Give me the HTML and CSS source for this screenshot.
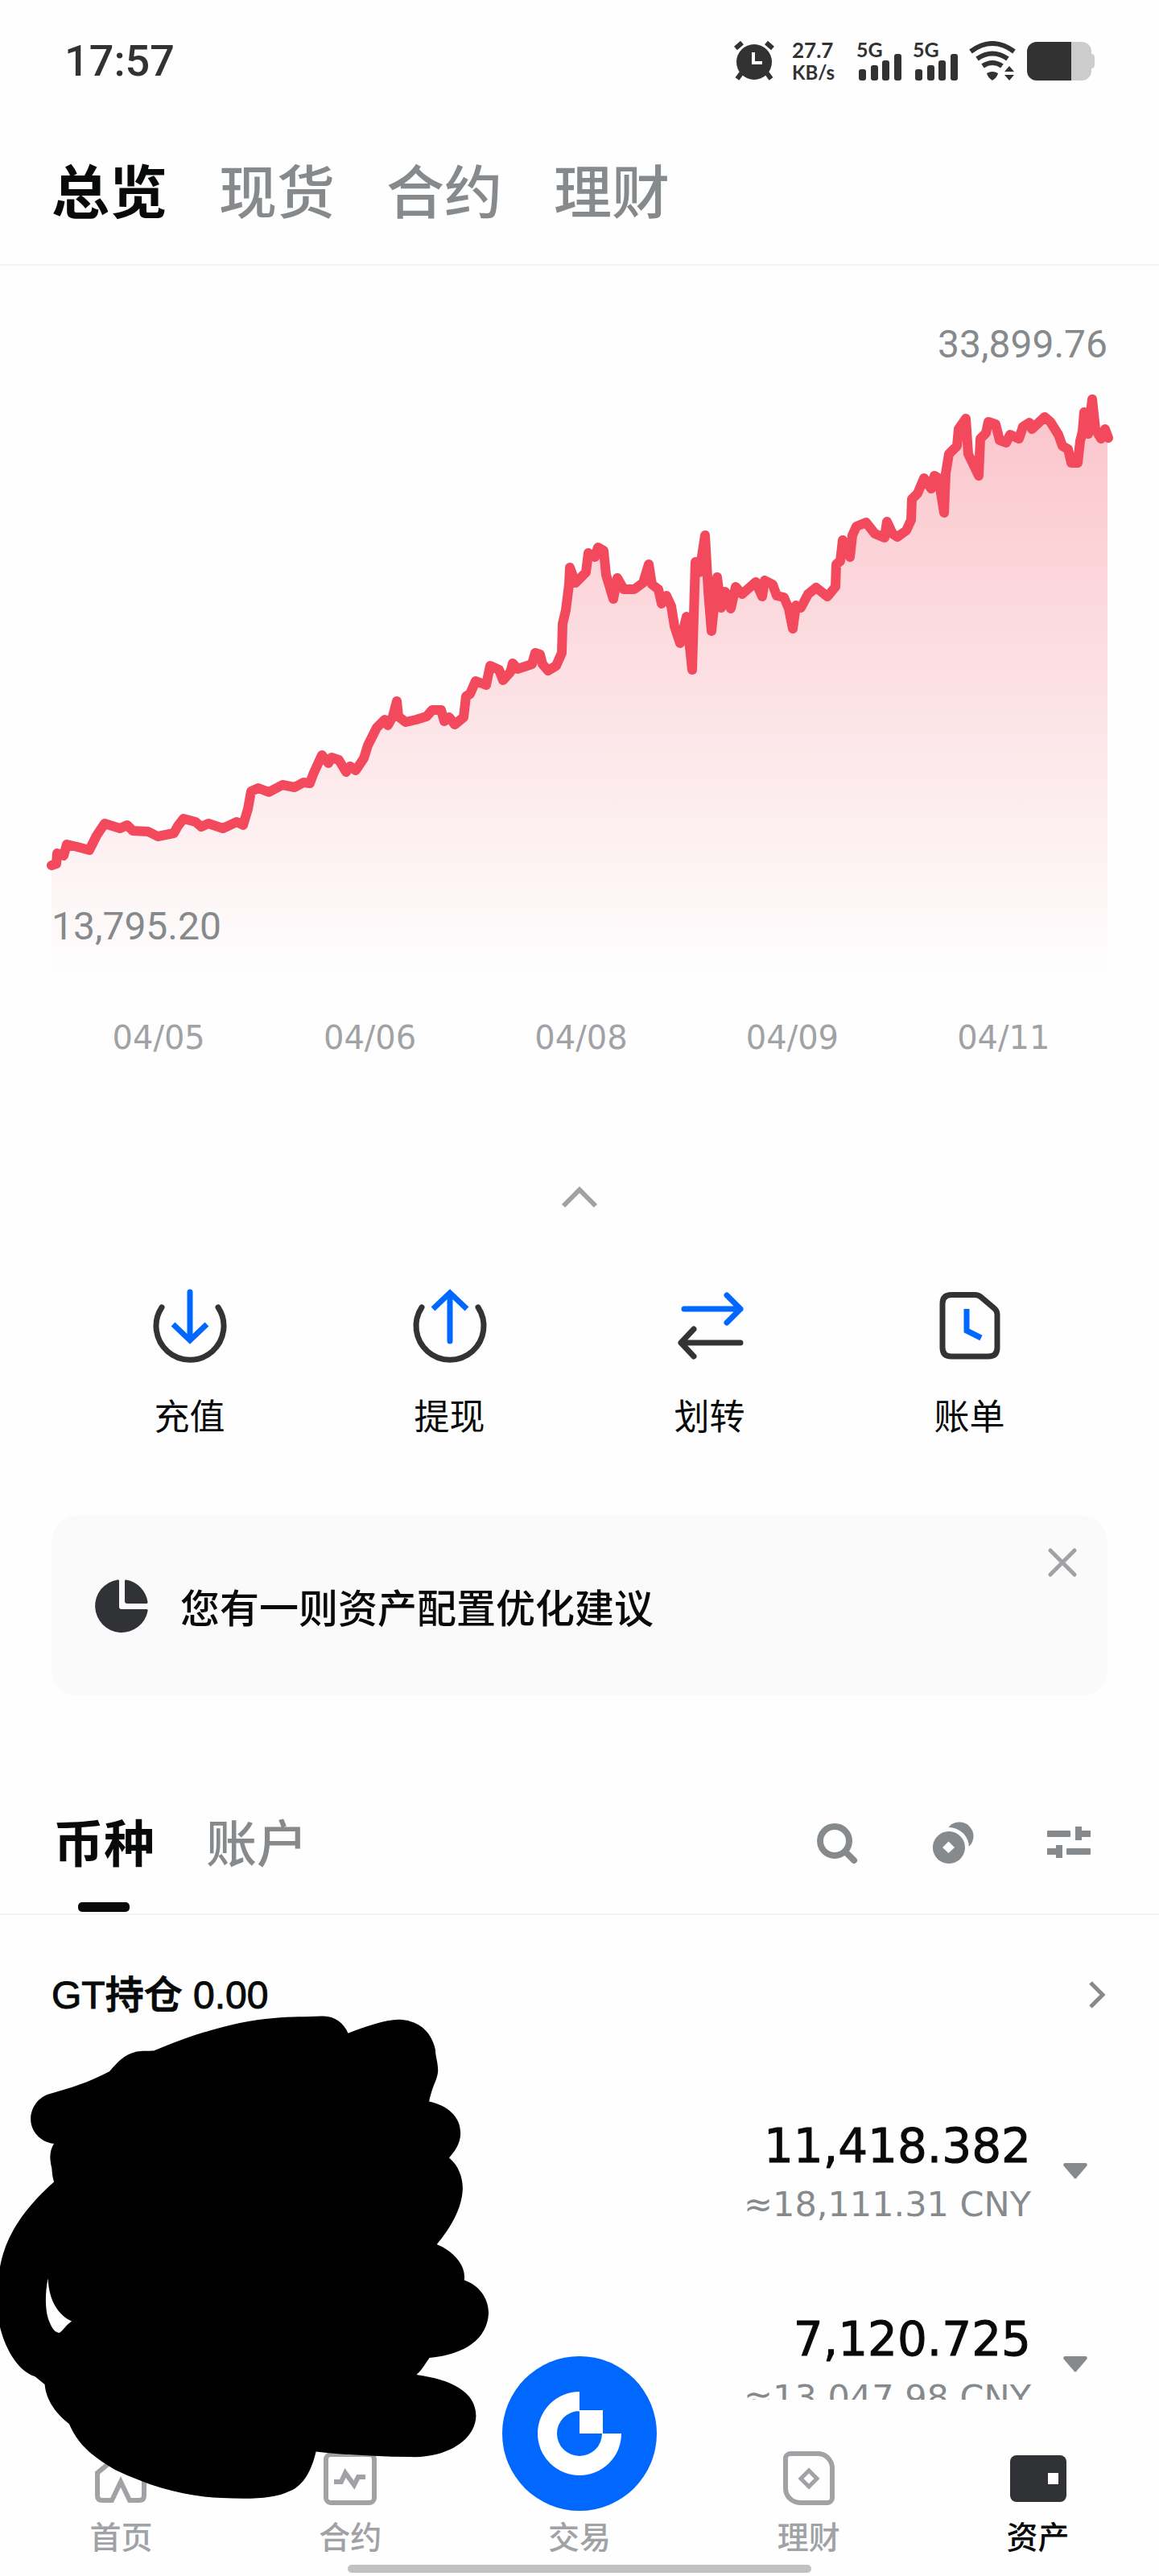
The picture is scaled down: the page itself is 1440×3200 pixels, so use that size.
FILE: index.html
```html
<!DOCTYPE html>
<html lang="zh-CN">
<head>
<meta charset="utf-8">
<meta name="viewport" content="width=device-width, initial-scale=1">
<title>资产总览</title>
<link rel="stylesheet" href="styles.css">
</head>
<body>
<div class="app">
  <header class="status">
    <time class="status-time">17:57</time>
    <div class="status-icons">
      <svg width="50" height="50" viewBox="0 0 50 50" aria-hidden="true">
        <circle cx="25" cy="26" r="22" fill="#323232"/>
        <path d="M2 9 10 2M48 9 40 2M9 40 4 47M41 40 46 47" stroke="#323232" stroke-width="6"/>
        <path d="M24 14V27H35" fill="none" stroke="#fff" stroke-width="4"/>
      </svg>
      <div class="speed"><span>27.7</span><span class="unit">KB/s</span></div>
      <svg class="signal" width="56" height="50" viewBox="0 0 56 50" aria-hidden="true">
        <text class="net" x="0" y="20">5G</text>
        <g fill="#323232"><rect x="3" y="35" width="9" height="14" rx="3"/><rect x="18" y="30" width="9" height="19" rx="3"/><rect x="32" y="24" width="9" height="25" rx="3"/><rect x="47" y="16" width="9" height="33" rx="3"/></g>
      </svg>
      <svg class="signal" width="56" height="50" viewBox="0 0 56 50" aria-hidden="true">
        <text class="net" x="0" y="20">5G</text>
        <g fill="#323232"><rect x="3" y="35" width="9" height="14" rx="3"/><rect x="18" y="30" width="9" height="19" rx="3"/><rect x="32" y="24" width="9" height="25" rx="3"/><rect x="47" y="16" width="9" height="33" rx="3"/></g>
      </svg>
      <svg width="58" height="50" viewBox="0 0 58 50" aria-hidden="true">
        <g fill="none" stroke="#323232" stroke-width="6"><path d="M2 13Q29-7 56 13"/><path d="M10 22Q29 9 48 22"/><path d="M17 31Q29 23 41 31"/></g>
        <path d="M22 40Q29 36 36 40Q35 45 29 49Q23 45 22 40ZM50 31 56 38H44ZM44 42H56L50 49Z" fill="#323232"/>
      </svg>
      <svg width="84" height="48" viewBox="0 0 84 48" aria-hidden="true">
        <path d="M55 0H68a12 12 0 0 1 12 12V15q4 0 4 5v8q0 5-4 5v3a12 12 0 0 1-12 12H55Z" fill="#ccc"/>
        <path d="M12 0H55V48H12A12 12 0 0 1 0 36V12A12 12 0 0 1 12 0Z" fill="#323232"/>
      </svg>
    </div>
  </header>

  <nav class="top-tabs" aria-label="账户类型">
    <a href="#overview" class="active" aria-current="page">总览</a>
    <a href="#spot">现货</a>
    <a href="#futures">合约</a>
    <a href="#earn">理财</a>
  </nav>

  <main class="content">
    <section class="chart" aria-label="资产走势">
      <p class="chart-max">33,899.76</p>
      <div class="plot">
        <svg class="plot-svg" viewBox="0 0 1440 755" aria-hidden="true">
          <defs>
            <linearGradient id="area" x1="0" y1="0" x2="0" y2="1">
              <stop offset="0" stop-color="#f3495d" stop-opacity=".32"/>
              <stop offset="1" stop-color="#f3495d" stop-opacity="0"/>
            </linearGradient>
            <path id="trend" d="M64 615 70 613 71 600 79 603 83 589 96 592 111 596 120 578 130 563 149 569 158 565 165 572 184 573 196 579 216 575 221 566 228 557 243 561 250 567 259 563 277 569 294 561 302 565 308 545 312 523 321 519 334 524 351 515 366 518 377 512 385 513 389 502 400 478 408 488 412 481 421 484 430 499 435 492 442 497 452 482 457 466 468 444 478 434 482 441 488 430 493 411 495 430 504 437 517 434 530 430 537 422 548 422 552 436 558 431 565 440 576 431 579 405 584 402 591 386 604 391 609 367 620 372 625 385 634 375 637 364 643 371 661 365 665 351 671 353 674 365 681 373 691 367 698 351 699 315 703 298 707 266 708 245 715 264 728 251 731 227 739 232 743 220 750 224 753 254 762 284 767 258 775 272 788 272 799 264 806 241 810 266 818 272 822 290 828 280 834 293 838 318 845 339 853 306 860 372 864 238 869 251 876 205 880 275 884 324 891 257 896 295 901 275 908 296 914 269 922 278 939 263 947 281 950 261 960 266 965 280 974 282 980 296 985 321 989 292 995 295 1004 278 1014 270 1028 281 1038 269 1039 241 1044 237 1047 211 1056 232 1059 205 1064 194 1076 189 1087 203 1099 208 1102 188 1109 203 1115 207 1126 199 1132 186 1133 160 1140 153 1148 134 1157 147 1161 131 1166 134 1173 177 1175 128 1179 104 1189 94 1191 73 1200 60 1203 104 1216 131 1218 85 1225 78 1228 64 1237 67 1242 87 1250 90 1255 80 1266 85 1271 70 1279 65 1282 73 1298 58 1305 64 1315 80 1320 94 1327 98 1331 115 1339 115 1342 88 1345 76 1347 52 1352 79 1357 36 1361 73 1368 85 1373 73 1377 84"/>
            <clipPath id="under"><path d="M64 615 70 613 71 600 79 603 83 589 96 592 111 596 120 578 130 563 149 569 158 565 165 572 184 573 196 579 216 575 221 566 228 557 243 561 250 567 259 563 277 569 294 561 302 565 308 545 312 523 321 519 334 524 351 515 366 518 377 512 385 513 389 502 400 478 408 488 412 481 421 484 430 499 435 492 442 497 452 482 457 466 468 444 478 434 482 441 488 430 493 411 495 430 504 437 517 434 530 430 537 422 548 422 552 436 558 431 565 440 576 431 579 405 584 402 591 386 604 391 609 367 620 372 625 385 634 375 637 364 643 371 661 365 665 351 671 353 674 365 681 373 691 367 698 351 699 315 703 298 707 266 708 245 715 264 728 251 731 227 739 232 743 220 750 224 753 254 762 284 767 258 775 272 788 272 799 264 806 241 810 266 818 272 822 290 828 280 834 293 838 318 845 339 853 306 860 372 864 238 869 251 876 205 880 275 884 324 891 257 896 295 901 275 908 296 914 269 922 278 939 263 947 281 950 261 960 266 965 280 974 282 980 296 985 321 989 292 995 295 1004 278 1014 270 1028 281 1038 269 1039 241 1044 237 1047 211 1056 232 1059 205 1064 194 1076 189 1087 203 1099 208 1102 188 1109 203 1115 207 1126 199 1132 186 1133 160 1140 153 1148 134 1157 147 1161 131 1166 134 1173 177 1175 128 1179 104 1189 94 1191 73 1200 60 1203 104 1216 131 1218 85 1225 78 1228 64 1237 67 1242 87 1250 90 1255 80 1266 85 1271 70 1279 65 1282 73 1298 58 1305 64 1315 80 1320 94 1327 98 1331 115 1339 115 1342 88 1345 76 1347 52 1352 79 1357 36 1361 73 1368 85 1373 73 1376 84V755H64Z"/></clipPath>
          </defs>
          <rect x="64" y="36" width="1312" height="719" fill="url(#area)" clip-path="url(#under)"/>
          <use href="#trend" fill="none" stroke="#f3495d" stroke-width="12" stroke-linecap="round" stroke-linejoin="round"/>
        </svg>
        <p class="chart-min">13,795.20</p>
      </div>
      <div class="dates"><span>04/05</span><span>04/06</span><span>04/08</span><span>04/09</span><span>04/11</span></div>
      <button class="collapse" type="button" aria-label="收起图表">
        <svg width="48" height="32" viewBox="0 0 48 32" aria-hidden="true"><path d="M4 27 24 7 44 27" fill="none" stroke="#a0a2a5" stroke-width="6"/></svg>
      </button>
    </section>

    <section class="actions" aria-label="快捷操作">
      <button type="button" class="action">
        <svg width="96" height="96" viewBox="0 0 96 96" fill="none" stroke-width="7" aria-hidden="true"><path d="M13 25A42 42 0 1 0 83 25" stroke="#323433" stroke-linecap="round"/><path d="M48 6V64" stroke="#0068ff" stroke-linecap="round"/><path d="M27 46 48 66 69 46" stroke="#0068ff"/></svg>
        <span>充值</span>
      </button>
      <button type="button" class="action">
        <svg width="96" height="96" viewBox="0 0 96 96" fill="none" stroke-width="7" aria-hidden="true"><path d="M13 25A42 42 0 1 0 83 25" stroke="#323433" stroke-linecap="round"/><path d="M48 67V10" stroke="#0068ff" stroke-linecap="round"/><path d="M27 27 48 7 69 27" stroke="#0068ff"/></svg>
        <span>提现</span>
      </button>
      <button type="button" class="action">
        <svg width="96" height="96" viewBox="0 0 96 96" fill="none" stroke-width="7" stroke-linecap="round" stroke-linejoin="round" aria-hidden="true"><path d="M16 27H86M69 10 86 27 69 44" stroke="#0068ff"/><path d="M86 69H12M28 52 12 69 28 86" stroke="#323433"/></svg>
        <span>划转</span>
      </button>
      <button type="button" class="action">
        <svg width="96" height="96" viewBox="0 0 96 96" fill="none" stroke-width="7" aria-hidden="true"><path d="M25 9.500H54q5 0 8 3L78 26q4 3 4 8V75q0 11-11 11H25Q14 86 14 75V20.500Q14 9.500 25 9.500Z" stroke="#323433"/><path d="M44 27V54L62 63" stroke="#0068ff"/></svg>
        <span>账单</span>
      </button>
    </section>

    <aside class="notice">
      <svg width="66" height="66" viewBox="0 0 66 66" fill="#303236" aria-hidden="true"><path d="M30 2Q30 0 28 .400A33 33 0 1 0 65.600 39Q66 37 64 37H33q-3 0-3-3Z"/><path d="M37 2Q37 0 39 .600A33 33 0 0 1 65.500 28Q66 30 64 30H40q-3 0-3-3Z"/></svg>
      <p>您有一则资产配置优化建议</p>
      <button type="button" class="close" aria-label="关闭">
        <svg width="36" height="36" viewBox="0 0 36 36" aria-hidden="true"><path d="M3 3 33 33M33 3 3 33" stroke="#a0a2a5" stroke-width="5" stroke-linecap="round"/></svg>
      </button>
    </aside>

    <div class="holdings-head">
      <nav class="sub-tabs" aria-label="资产视图">
        <a href="#coins" class="active" aria-current="true">币种</a>
        <a href="#accounts">账户</a>
      </nav>
      <div class="tools">
        <button type="button" aria-label="搜索"><svg width="56" height="56" viewBox="0 0 56 56" fill="none" stroke="#868a8c" stroke-width="8" aria-hidden="true"><circle cx="25" cy="25" r="18"/><path d="M38 38 49 49" stroke-width="8" stroke-linecap="round"/></svg></button>
        <button type="button" aria-label="小额币种"><svg width="56" height="56" viewBox="0 0 56 56" aria-hidden="true"><circle cx="36" cy="19" r="17.500" fill="#868a8c"/><circle cx="23" cy="33" r="25" fill="#fefefe"/><path d="M23 13a20 20 0 1 1-.1 0ZM22.500 25.500 15 33l7.500 7L30 33Z" fill="#868a8c" fill-rule="evenodd"/></svg></button>
        <button type="button" aria-label="筛选"><svg width="56" height="56" viewBox="0 0 56 56" fill="#868a8c" aria-hidden="true"><rect x="1" y="12" width="29" height="8" rx="1"/><path d="M36 7h8v5h11v8H44v4H36ZM1 34H12V30h8V46H12V42H1Z"/><rect x="25" y="34" width="30" height="8" rx="1"/></svg></button>
      </div>
    </div>

    <a class="gt" href="#gt">
      <span>GT持仓 0.00</span>
      <svg width="24" height="36" viewBox="0 0 24 36" aria-hidden="true"><path d="M3 3 18 18 3 33" fill="none" stroke="#868a8c" stroke-width="5"/></svg>
    </a>

    <ul class="coins">
      <li class="coin">
        <div class="figures"><p class="amount">11,418.382</p><p class="value">≈18,111.31 CNY</p></div>
        <button type="button" aria-label="展开"><svg width="30" height="20" viewBox="0 0 30 20" aria-hidden="true"><path d="M2 0H28Q31 1 29 4L17 18Q15 21 13 18L1 4Q-1 1 2 0Z" fill="#868a8c"/></svg></button>
      </li>
      <li class="coin">
        <div class="figures"><p class="amount">7,120.725</p><p class="value">≈13,047.98 CNY</p></div>
        <button type="button" aria-label="展开"><svg width="30" height="20" viewBox="0 0 30 20" aria-hidden="true"><path d="M2 0H28Q31 1 29 4L17 18Q15 21 13 18L1 4Q-1 1 2 0Z" fill="#868a8c"/></svg></button>
      </li>
    </ul>
  </main>

  <nav class="tabbar" aria-label="主导航">
    <a href="#home">
      <svg width="76" height="76" viewBox="0 0 76 76" fill="none" stroke="#a0a2a5" stroke-width="6" aria-hidden="true"><path d="M38 7 9 31V59q0 6 6 6H27L38 42 49 65H61q6 0 6-6V31Z"/></svg>
      <span>首页</span>
    </a>
    <a href="#contract">
      <svg width="76" height="76" viewBox="0 0 76 76" fill="none" stroke="#a0a2a5" stroke-width="6" aria-hidden="true"><rect x="8" y="8" width="60" height="60" rx="6"/><path d="M18 42H27L32 31 43 46 48 36H57"/></svg>
      <span>合约</span>
    </a>
    <a href="#trade" class="trade">
      <svg class="trade-logo" width="192" height="192" viewBox="0 0 192 192" aria-hidden="true"><circle cx="96" cy="96" r="96" fill="#0068ff"/><path d="M96 44A52 52 0 1 0 148 96H124A28 28 0 1 1 96 68ZM96 67H125V96H96Z" fill="#fff"/></svg>
      <span>交易</span>
    </a>
    <a href="#finance">
      <svg width="76" height="76" viewBox="0 0 76 76" fill="none" stroke="#a0a2a5" stroke-width="6" aria-hidden="true"><path d="M15 7H49A18 18 0 0 1 67 25V62A6 6 0 0 1 61 68H27A18 18 0 0 1 9 50V13A6 6 0 0 1 15 7Z"/><path d="M38 28 48 38 38 48 28 38Z" stroke-width="5"/></svg>
      <span>理财</span>
    </a>
    <a href="#assets" class="active" aria-current="page">
      <svg width="76" height="76" viewBox="0 0 76 76" aria-hidden="true"><rect x="3" y="9" width="70" height="58" rx="8" fill="#303236"/><rect x="50" y="31" width="13" height="14" fill="#fff"/></svg>
      <span>资产</span>
    </a>
  </nav>
  <div class="home-indicator"></div>

  <svg class="scribble" width="612" height="608" viewBox="0 0 612 608" aria-hidden="true">
    <path transform="translate(0 -60) scale(.4592 .4847)" fill-rule="evenodd" d="M416 222C520 180 640 145 740 138C790 134 830 135 872 133C905 132 930 150 942 177C990 160 1040 142 1080 142C1140 144 1170 180 1178 220C1178 235 1186 255 1185 275C1182 300 1172 305 1161 352C1210 362 1246 390 1246 433C1246 460 1230 480 1215 496C1240 515 1252 545 1252 575C1250 630 1215 680 1182 718C1225 735 1262 770 1256 810C1295 822 1322 855 1322 895C1318 960 1260 1000 1162 1009C1150 1025 1140 1042 1127 1052C1220 1064 1288 1095 1288 1158C1286 1220 1210 1263 1120 1263C1030 1262 940 1258 855 1249C845 1290 825 1335 785 1350C740 1372 670 1371 600 1368C500 1364 410 1340 310 1295C250 1262 210 1230 187 1178C155 1155 125 1120 121 1077L95 1057C40 1040 10 970 0 930L0 775C15 700 60 630 146 558C142 545 141 535 140 522C135 505 132 480 146 460C105 455 83 425 83 396C84 365 105 340 135 332C190 318 240 303 296 275C320 250 335 232 370 224C385 221 400 223 416 222ZM130 805C121 845 122 890 133 915C140 930 145 942 160 945C170 940 178 925 194 915C160 900 132 865 130 805Z"/>
  </svg>
</div>
</body>
</html>
```
FILE: styles.css
```css
* { box-sizing: border-box; }

body {
  margin: 0;
  background: #fefefe;
  color: #080a0a;
  font-family: "Liberation Sans", "Noto Sans CJK SC", sans-serif;
}

p, ul { margin: 0; padding: 0; }
ul { list-style: none; }
a { color: inherit; text-decoration: none; }
svg { display: block; flex: none; }

button {
  padding: 0;
  border: 0;
  background: none;
  color: inherit;
  font: inherit;
  cursor: pointer;
}

.app {
  position: relative;
  display: flex;
  flex-direction: column;
  height: 100vh;
  overflow: hidden;
}

/* Status bar */
.status {
  flex: none;
  display: flex;
  align-items: center;
  justify-content: space-between;
  height: 152px;
  padding: 0 80px;
  color: #323232;
}

.status-time { font: 500 54px/64px Roboto, sans-serif; }

.status-icons {
  display: flex;
  align-items: center;
  gap: 14px;
}

.speed {
  display: flex;
  flex-direction: column;
  width: 56px;
  margin: 0 10px 0 8px;
  font: 700 26px/28px Lato, sans-serif;
}

.speed .unit { font-size: 24px; }
.signal { overflow: visible; }
.net { font: 700 25px Lato, sans-serif; fill: #323232; }

/* Top tabs */
.top-tabs {
  flex: none;
  display: flex;
  align-items: center;
  gap: 64px;
  height: 178px;
  padding: 0 64px 12px;
  border-bottom: 2px solid #f3f3f4;
  color: #868a8c;
  font: 500 72px/96px "Noto Sans CJK SC", sans-serif;
}

.top-tabs .active,
.sub-tabs .active {
  color: #080a0a;
  font-weight: 700;
}

.content {
  flex: 1;
  min-height: 0;
  overflow-y: auto;
  scrollbar-width: none;
}

/* Chart */
.chart { padding-top: 66px; }

.chart-max,
.chart-min {
  color: #868a8c;
  font: 400 48px/64px Roboto, sans-serif;
}

.chart-max {
  padding: 0 64px;
  text-align: right;
}

.plot { position: relative; }
.plot-svg { width: 100%; height: auto; }

.chart-min {
  position: absolute;
  left: 64px;
  bottom: 32px;
}

.dates {
  display: grid;
  grid-template-columns: repeat(5, 1fr);
  margin-top: 44px;
  padding: 0 62px 0 66px;
  color: #a0a2a5;
  font: 40px/60px "DejaVu Sans", sans-serif;
  text-align: center;
}

.collapse {
  display: flex;
  align-items: center;
  justify-content: center;
  width: 96px;
  height: 80px;
  margin: 128px auto 0;
}

/* Quick actions */
.actions {
  display: grid;
  grid-template-columns: repeat(4, 1fr);
  margin-top: 72px;
  padding: 0 74px;
}

.action {
  display: flex;
  flex-direction: column;
  align-items: center;
  gap: 32px;
  font: 400 44px/60px "Noto Sans CJK SC", sans-serif;
}

/* Notice card */
.notice {
  position: relative;
  display: flex;
  align-items: center;
  gap: 40px;
  height: 224px;
  margin: 96px 64px 0;
  padding: 0 54px;
  border-radius: 32px;
  background: #fafafa;
  font: 500 49px/64px "Noto Sans CJK SC", sans-serif;
}

.close {
  position: absolute;
  top: 40px;
  right: 38px;
}

/* Holdings */
.holdings-head {
  display: flex;
  align-items: center;
  justify-content: space-between;
  height: 180px;
  margin-top: 92px;
  padding: 0 66px;
  border-bottom: 2px solid #f3f3f4;
}

.sub-tabs {
  display: flex;
  align-self: stretch;
  gap: 64px;
  color: #868a8c;
  font: 500 63px/174px "Noto Sans CJK SC", sans-serif;
}

.sub-tabs .active { position: relative; }

.sub-tabs .active::after {
  content: "";
  position: absolute;
  left: 50%;
  bottom: 2px;
  width: 64px;
  height: 12px;
  margin-left: -32px;
  border-radius: 5px;
  background: #080a0a;
}

.tools {
  display: flex;
  gap: 88px;
  margin: 4px 18px 0 0;
}

.gt {
  display: flex;
  align-items: center;
  justify-content: space-between;
  height: 198px;
  padding: 0 64px;
  font-size: 48px;
  font-weight: 500;
}

.gt span {
  padding-bottom: 8px;
  -webkit-text-stroke: 1px currentColor;
}

.coin {
  display: flex;
  align-items: center;
  justify-content: flex-end;
  gap: 40px;
  height: 240px;
  padding-right: 89px;
  text-align: right;
  font-family: "DejaVu Sans", sans-serif;
}

.figures {
  padding-top: 10px;
  line-height: 72px;
}

.amount {
  font-size: 58px;
  -webkit-text-stroke: 1px currentColor;
}

.value {
  color: #868a8c;
  font-size: 43px;
}

/* Bottom navigation */
.tabbar {
  flex: none;
  display: grid;
  grid-template-columns: repeat(5, 1fr);
  padding: 60px 8px 0;
  background: #fefefe;
  color: #a0a2a5;
  font: 500 39px/60px "Noto Sans CJK SC", sans-serif;
}

.tabbar a {
  position: relative;
  display: flex;
  flex-direction: column;
  align-items: center;
  justify-content: flex-end;
  gap: 2px;
}

.tabbar .active { color: #080a0a; }

.trade-logo {
  position: absolute;
  bottom: 60px;
}

.home-indicator {
  flex: none;
  width: 40%;
  height: 10px;
  margin: 7px auto 4px;
  border-radius: 5px;
  background: #c1c1c1;
}

/* Freehand marker stroke lying over the list and the navigation */
.scribble {
  position: absolute;
  left: 0;
  bottom: 92px;
  pointer-events: none;
}
```
